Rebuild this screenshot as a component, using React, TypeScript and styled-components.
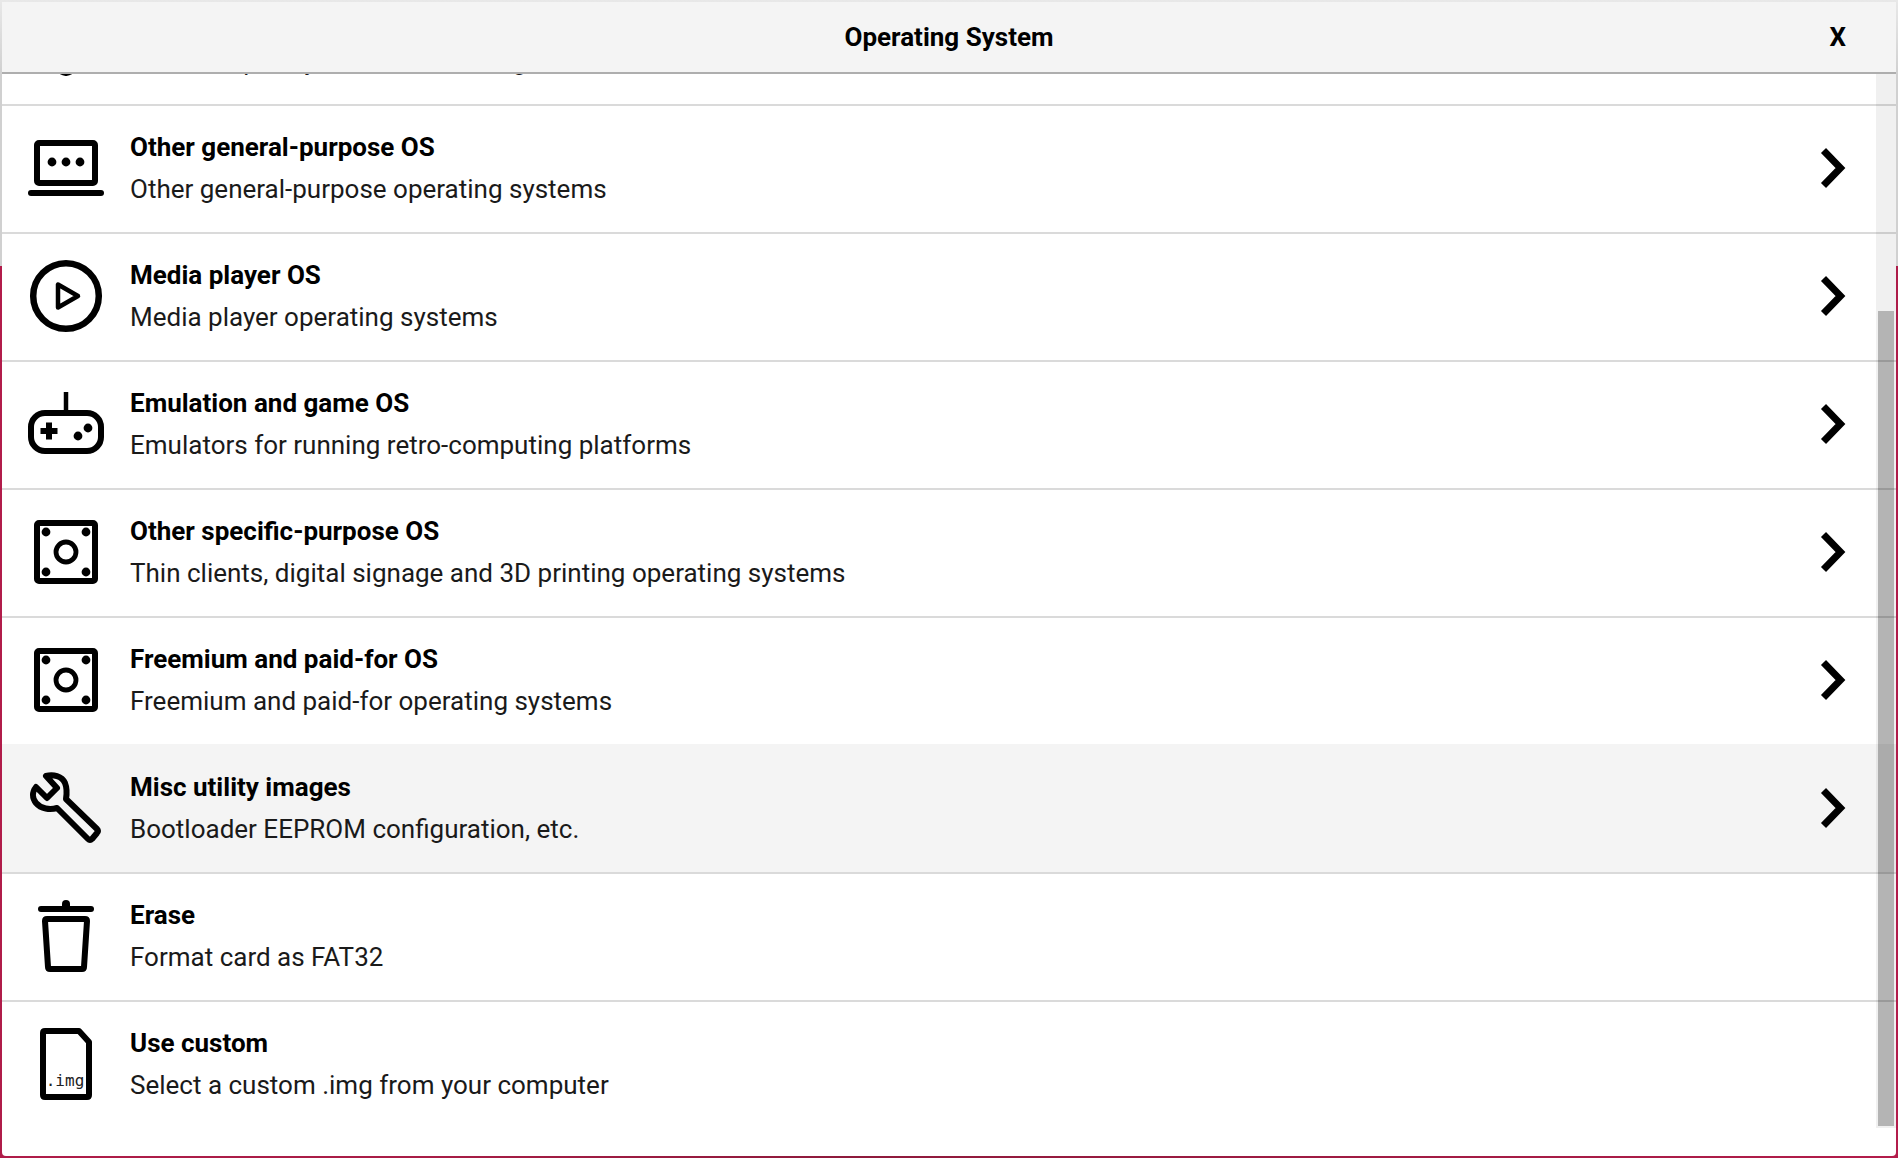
import React from "react";
import styled, { createGlobalStyle } from "styled-components";

const GlobalStyle = createGlobalStyle`
  *, *::before, *::after { box-sizing: border-box; }
  html, body { margin: 0; }
  body { font-family: Roboto, "Noto Sans", sans-serif; font-size: 26px; line-height: 32px; color: #000; }
`;

const Backdrop = styled.div`
  display: flex;
  height: 100vh;
  padding: 2px;
  background:
    linear-gradient(#e8e8e8, #d0d0d0 74px, #d0d0d0) top / 100% 266px no-repeat,
    linear-gradient(100deg, #b31c4b, #a81c46 30%, #8e1a3c 50%, #b31c4b);
`;

const Popup = styled.section`
  flex: 1;
  min-width: 0;
  display: flex;
  flex-direction: column;
  background: #fff;
  border-radius: 0 0 4px 4px;
  overflow: hidden;
`;

const Header = styled.header`
  flex: none;
  display: grid;
  grid-template-columns: 1fr auto 1fr;
  align-items: center;
  height: 72px;
  padding: 0 50px;
  background: #f4f4f4;
  border-bottom: 2px solid #aeaeae;
`;

const Title = styled.h1`
  grid-column: 2;
  margin: 0;
  font-size: 26px;
  font-weight: 700;
`;

const CloseButton = styled.button`
  justify-self: end;
  border: 0;
  padding: 0;
  background: none;
  font: inherit;
  font-weight: 700;
  color: inherit;
  cursor: pointer;
`;

const Body = styled.div`
  flex: 1;
  min-height: 0;
  position: relative;
  display: flex;
  flex-direction: column;
  justify-content: flex-end;
  overflow: hidden;
  margin-bottom: 28px;
`;

const List = styled.ul`
  list-style: none;
  margin: 0;
  padding: 0;
`;

const Row = styled.button<{ $active?: boolean }>`
  display: flex;
  align-items: center;
  gap: 24px;
  width: 100%;
  height: 128px;
  padding: 0 48px 2px 24px;
  border: 0;
  border-top: 2px solid ${(p) => (p.$active ? "#f4f4f4" : "#dadada")};
  background: ${(p) => (p.$active ? "#f4f4f4" : "#fff")};
  font: inherit;
  color: inherit;
  text-align: left;
  cursor: pointer;
`;

const RowText = styled.span`
  flex: 1;
  display: flex;
  flex-direction: column;
  gap: 10px;
`;

const Name = styled.span`
  font-weight: 700;
`;

const Description = styled.span`
  color: #1a1a1a;
`;

const Icon = styled.svg`
  flex: none;
  width: 80px;
  height: 80px;
  fill: none;
  stroke: #000;
  stroke-width: 6;
  stroke-linecap: round;
  stroke-linejoin: round;
`;

const Chevron = styled.svg`
  flex: none;
  width: 30px;
  height: 40px;
  fill: none;
  stroke: #000;
  stroke-width: 7;
`;

const ScrollTrack = styled.div`
  position: absolute;
  inset: 0 0 0 auto;
  width: 20px;
  display: flex;
  flex-direction: column;
  justify-content: flex-end;
  padding: 2px;
  background: rgba(0, 0, 0, 0.06);
`;

const ScrollThumb = styled.div`
  height: 77.6%;
  background: rgba(0, 0, 0, 0.25);
`;

const Dot = ({ x, y, r = 4.4 }: { x: number; y: number; r?: number }) => (
  <circle cx={x} cy={y} r={r} fill="#000" stroke="none" />
);

const icons: Record<string, React.ReactNode> = {
  raspberry: (
    <>
      <path d="M40 73Q34 72 28 66Q12 56 14 36Q18 19 40 19Q62 19 66 36Q68 56 52 66Q46 72 40 73Z" />
      <path d="M40 19C34 8 24 6 18 8c2 8 10 12 22 11C46 8 56 6 62 8c-2 8-10 12-22 11" />
    </>
  ),
  laptop: (
    <>
      <rect x="11" y="15" width="58" height="40" rx="2" />
      <path d="M5 65H75" />
      <Dot x={26} y={34} />
      <Dot x={40} y={34} />
      <Dot x={54} y={34} />
    </>
  ),
  play: (
    <>
      <circle cx="40" cy="40" r="32.800" strokeWidth="6.500" />
      <path d="M32 28.500V51.500L52 40Z" strokeWidth="4.500" />
    </>
  ),
  gamepad: (
    <>
      <rect x="5" y="29" width="70" height="38" rx="14" />
      <path d="M40 8V28" strokeWidth="4.500" strokeLinecap="butt" />
      <path d="M23 38.500V55.500M14.500 47H31.500" strokeWidth="6" strokeLinecap="butt" />
      <Dot x={52} y={52} />
      <Dot x={62} y={44} />
    </>
  ),
  board: (
    <>
      <rect x="11" y="11" width="58" height="58" rx="2" />
      <circle cx="40" cy="40" r="10" strokeWidth="4.800" />
      <Dot x={20} y={20} />
      <Dot x={60} y={20} />
      <Dot x={20} y={60} />
      <Dot x={60} y={60} />
    </>
  ),
  wrench: (
    <path
      strokeWidth="6"
      d="M20 8C27 6 36 8 39 15C41 20 41 25 40 31L71 61Q73 63 71 65L66 71Q64 73 62 71L31 40C24 42 15 41 10 35C6 30 6 24 10 19L21 30L31 20Z"
    />
  ),
  trash: (
    <>
      <path d="M15 13H65" />
      <path d="M40 8V12" strokeWidth="8" />
      <path d="M21 23H59Q61 23 61 25L58 71Q58 73 56 73H24Q22 73 22 71L19 25Q19 23 21 23Z" />
    </>
  ),
  image: (
    <>
      <path d="M19 7H53L63 18V71Q63 73 61 73H19Q17 73 17 71V9Q17 7 19 7Z" />
      <text
        x="39"
        y="62"
        textAnchor="middle"
        fill="#222"
        stroke="none"
        fontFamily='"DejaVu Sans Mono", monospace'
        fontSize="16"
      >
        .img
      </text>
    </>
  ),
};

type Item = { icon: string; name: string; description: string; sub?: boolean; active?: boolean };

const items: Item[] = [
  { icon: "raspberry", name: "Raspberry Pi OS (other)", description: "Other Raspberry Pi OS based images", sub: true },
  { icon: "laptop", name: "Other general-purpose OS", description: "Other general-purpose operating systems", sub: true },
  { icon: "play", name: "Media player OS", description: "Media player operating systems", sub: true },
  { icon: "gamepad", name: "Emulation and game OS", description: "Emulators for running retro-computing platforms", sub: true },
  { icon: "board", name: "Other specific-purpose OS", description: "Thin clients, digital signage and 3D printing operating systems", sub: true },
  { icon: "board", name: "Freemium and paid-for OS", description: "Freemium and paid-for operating systems", sub: true },
  { icon: "wrench", name: "Misc utility images", description: "Bootloader EEPROM configuration, etc.", sub: true, active: true },
  { icon: "trash", name: "Erase", description: "Format card as FAT32" },
  { icon: "image", name: "Use custom", description: "Select a custom .img from your computer" },
];

export default function App() {
  return (
    <>
      <GlobalStyle />
      <Backdrop>
        <Popup aria-labelledby="popup-title">
          <Header>
            <Title id="popup-title">Operating System</Title>
            <CloseButton type="button">X</CloseButton>
          </Header>
          <Body>
            <List>
              {items.map((item) => (
                <li key={item.name}>
                  <Row type="button" $active={item.active}>
                    <Icon viewBox="0 0 80 80" aria-hidden="true">{icons[item.icon]}</Icon>
                    <RowText>
                      <Name>{item.name}</Name>
                      <Description>{item.description}</Description>
                    </RowText>
                    {item.sub && (
                      <Chevron viewBox="0 0 30 40" aria-hidden="true">
                        <path d="M5.500 2.500L22.500 20L5.500 37.500" />
                      </Chevron>
                    )}
                  </Row>
                </li>
              ))}
            </List>
            <ScrollTrack>
              <ScrollThumb />
            </ScrollTrack>
          </Body>
        </Popup>
      </Backdrop>
    </>
  );
}
